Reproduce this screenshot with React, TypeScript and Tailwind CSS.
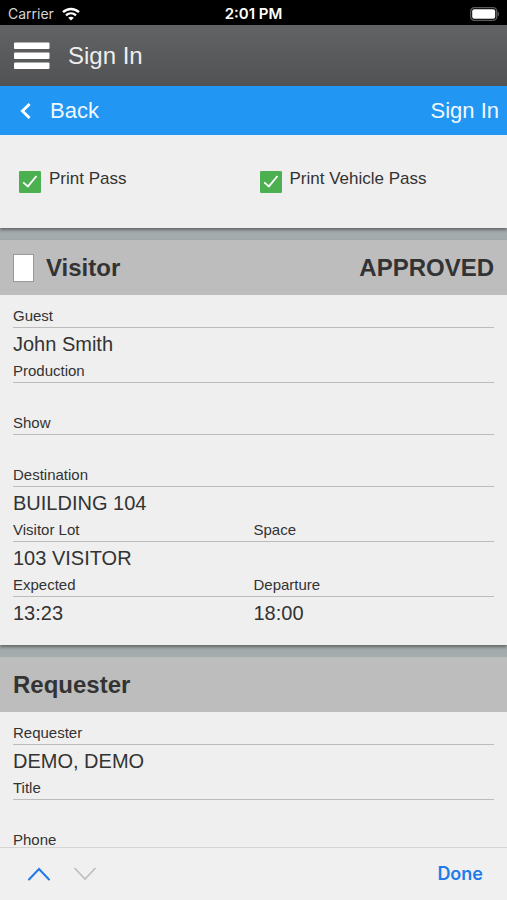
import React, { useState } from "react";

type FieldData = {
  label: string;
  value?: string;
  half?: boolean;
};

const visitorFields: FieldData[] = [
  { label: "Guest", value: "John Smith" },
  { label: "Production" },
  { label: "Show" },
  { label: "Destination", value: "BUILDING 104" },
  { label: "Visitor Lot", value: "103 VISITOR", half: true },
  { label: "Space", half: true },
  { label: "Expected", value: "13:23", half: true },
  { label: "Departure", value: "18:00", half: true },
];

const requesterFields: FieldData[] = [
  { label: "Requester", value: "DEMO, DEMO" },
  { label: "Title" },
  { label: "Phone" },
];

const StatusBar: React.FC = () => (
  <div className="grid h-[25px] shrink-0 grid-cols-3 items-center bg-black px-2 pt-0.5 font-[Inter,sans-serif] text-sm leading-5 text-white">
    <div className="flex items-center gap-2 text-[#d4d4d4]">
      <span>Carrier</span>
      <svg width="18" height="14" viewBox="0 0 18 14" fill="none" aria-hidden="true">
        <path d="M1 5.2C5.6.9 12.4.9 17 5.2" stroke="#fff" strokeWidth="2.5" />
        <path d="M4 8.3c2.9-2.7 7.1-2.7 10 0" stroke="#fff" strokeWidth="2.3" />
        <path d="M9 13.6 6.2 10.8c1.6-1.5 4-1.5 5.6 0z" fill="#fff" />
      </svg>
    </div>
    <span className="text-center text-[15px] font-semibold">2:01 PM</span>
    <svg className="justify-self-end" width="29" height="14" viewBox="0 0 29 14" aria-hidden="true">
      <rect x="0.7" y="0.7" width="26" height="12.6" rx="3.6" fill="none" stroke="#5c5c5c" strokeWidth="1.3" />
      <rect x="2.2" y="2.2" width="23" height="9.6" rx="2" fill="#fff" />
      <path d="M27.6 4.6c1.9.8 1.9 4 0 4.8z" fill="#5c5c5c" />
    </svg>
  </div>
);

const PassCheckbox: React.FC<{ label: string }> = ({ label }) => {
  const [checked, setChecked] = useState<boolean>(true);

  return (
    <label className="flex items-start gap-2 px-1.5 text-[17px] leading-5">
      <span className="mt-0.5 grid shrink-0">
        <input
          type="checkbox"
          checked={checked}
          onChange={() => setChecked(!checked)}
          className="col-start-1 row-start-1 size-[22px] appearance-none rounded-[1px] border border-[#999] bg-white checked:border-[#4caf50] checked:bg-[#4caf50]"
        />
        {checked && (
          <svg
            className="pointer-events-none col-start-1 row-start-1"
            width="22"
            height="22"
            viewBox="0 0 22 22"
            fill="none"
            aria-hidden="true"
          >
            <path d="m4.2 11.4 4.7 4L17.5 5" stroke="#fff" strokeWidth="1.8" />
          </svg>
        )}
      </span>
      {label}
    </label>
  );
};

const FieldList: React.FC<{ fields: FieldData[] }> = ({ fields }) => (
  <dl className="grid grid-cols-2 px-[13px] pt-2.5 pb-4">
    {fields.map(({ label, value, half }) => (
      <div key={label} className={half ? "col-span-1" : "col-span-2"}>
        <dt className="border-b border-[#bcbcbc] text-[15px] leading-[22px]">{label}</dt>
        <dd className="min-h-[29px] text-xl leading-8">{value}</dd>
      </div>
    ))}
  </dl>
);

const App: React.FC = () => {
  const [selected, setSelected] = useState<boolean>(false);

  return (
    <div className="flex h-screen flex-col overflow-hidden bg-[#a3abac] font-['Liberation_Sans',Arial,sans-serif] text-[#333]">
      <StatusBar />
      <header className="flex h-[61px] shrink-0 items-center gap-[18px] bg-linear-to-b from-[#626364] to-[#515253] px-3.5 text-[#eee]">
        <button type="button" aria-label="Menu">
          <svg width="36" height="27" viewBox="0 0 36 27" fill="#fff" aria-hidden="true">
            <rect y="0.5" width="35.5" height="6.5" rx="1" />
            <rect y="10.5" width="35.5" height="6.5" rx="1" />
            <rect y="20.5" width="35.5" height="6.5" rx="1" />
          </svg>
        </button>
        <h1 className="text-2xl">Sign In</h1>
      </header>
      <nav className="flex h-[49px] shrink-0 items-center justify-between bg-[#2196f3] pr-2 pl-5 text-[22px] text-[#f0f8ff]">
        <button type="button" className="flex items-center gap-[18px]">
          <svg width="12" height="16" viewBox="0 0 12 16" fill="none" aria-hidden="true">
            <path d="M9.6 1 2.4 8l7.2 7" stroke="#fff" strokeWidth="2.8" />
          </svg>
          Back
        </button>
        <button type="button">Sign In</button>
      </nav>

      <main className="flex min-h-0 flex-1 flex-col gap-3 overflow-hidden">
        <section className="grid shrink-0 grid-cols-2 bg-[#efefef] px-[13px] pt-[34px] pb-[35px] shadow-[0_2px_3px_#666]">
          <PassCheckbox label="Print Pass" />
          <PassCheckbox label="Print Vehicle Pass" />
        </section>

        <section className="shrink-0 bg-[#efefef] shadow-[0_2px_3px_#666]">
          <div className="flex h-[55px] items-center justify-between bg-[#bdbdbd] px-[13px] text-2xl font-bold">
            <div className="flex items-center gap-3">
              <input
                type="checkbox"
                aria-labelledby="visitor-title"
                checked={selected}
                onChange={() => setSelected(!selected)}
                className="h-7 w-[21px] appearance-none border border-[#999] bg-white checked:bg-[#4caf50]"
              />
              <h2 id="visitor-title">Visitor</h2>
            </div>
            <span>APPROVED</span>
          </div>
          <FieldList fields={visitorFields} />
        </section>

        <section className="shrink-0 bg-[#efefef]">
          <h2 className="flex h-[55px] items-center bg-[#bdbdbd] px-[13px] text-2xl font-bold">
            Requester
          </h2>
          <FieldList fields={requesterFields} />
        </section>
      </main>

      <footer className="flex h-[53px] shrink-0 items-center justify-between border-t border-[#d4d4d4] bg-[#f0f0f0] px-6">
        <div className="flex gap-4">
          <button type="button" aria-label="Previous field" className="px-1">
            <svg width="22" height="14" viewBox="0 0 22 14" fill="none" aria-hidden="true">
              <path d="M1 12.5 11 2l10 10.5" stroke="#1f7bea" strokeWidth="2" strokeLinecap="round" />
            </svg>
          </button>
          <button type="button" aria-label="Next field" className="px-1" disabled>
            <svg width="22" height="14" viewBox="0 0 22 14" fill="none" aria-hidden="true">
              <path d="M1 1.5 11 12 21 1.5" stroke="#bdbdbd" strokeWidth="1.6" strokeLinecap="round" />
            </svg>
          </button>
        </div>
        <button type="button" className="font-[Inter,sans-serif] text-lg font-semibold text-[#1f7bea]">
          Done
        </button>
      </footer>
    </div>
  );
};

export default App;
